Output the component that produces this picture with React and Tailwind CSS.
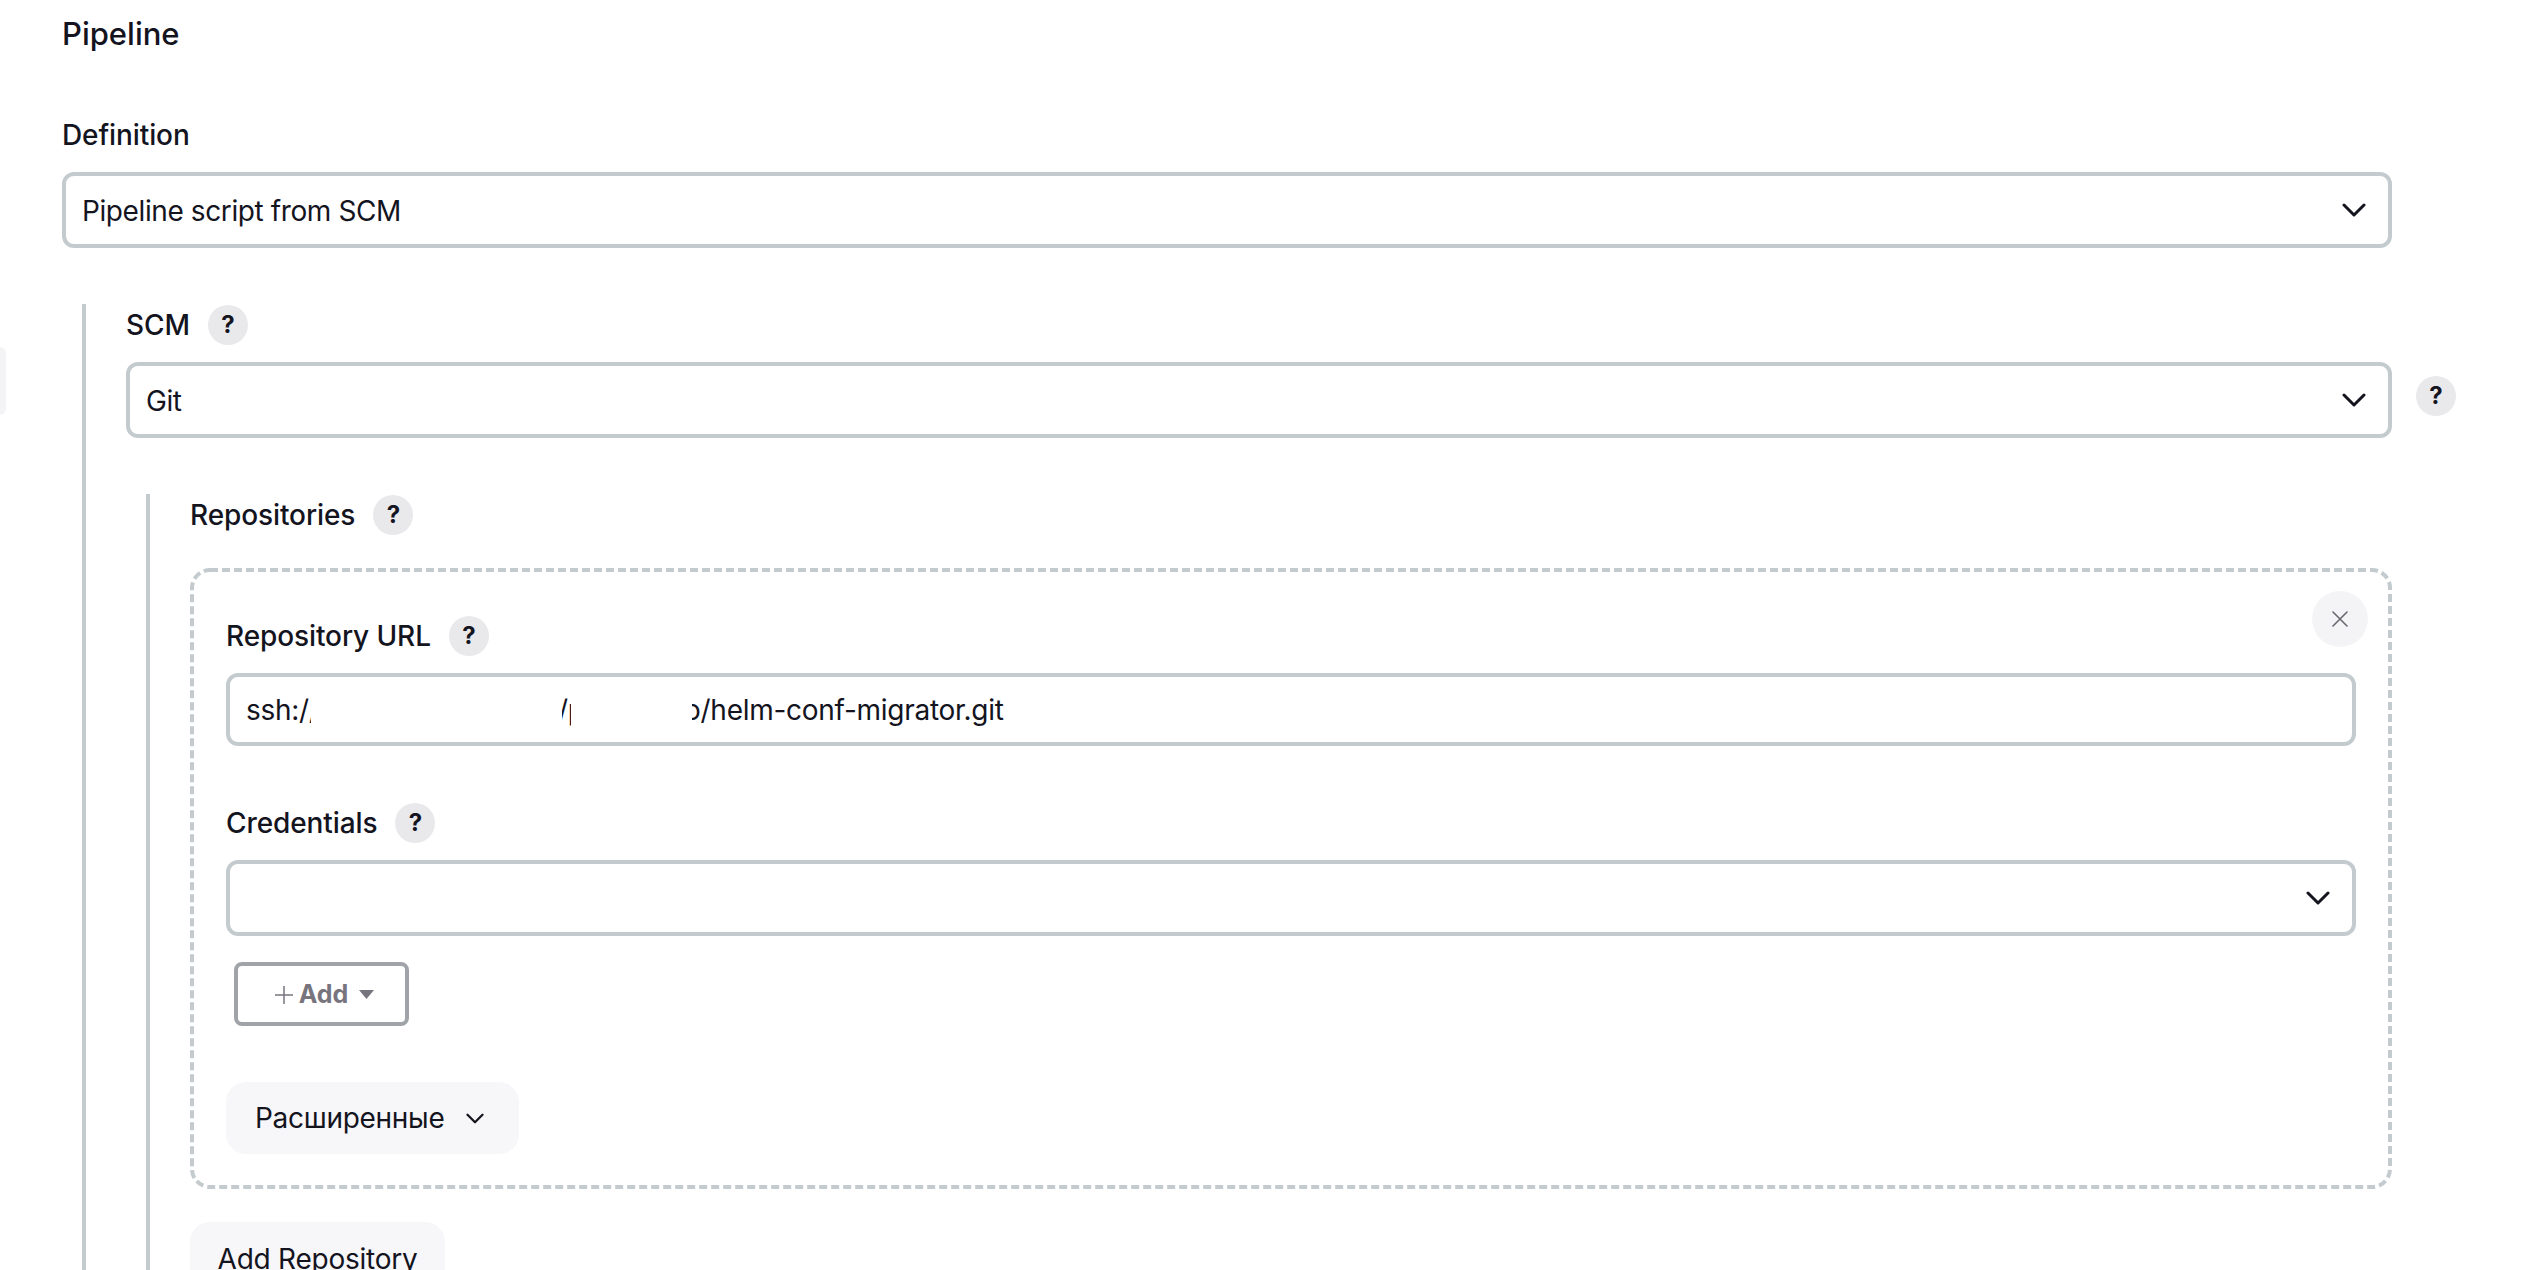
import React from "react";

const Help = ({ className = "" }) => (
  <span className={"flex h-10 w-10 shrink-0 items-center justify-center rounded-full bg-[#e9e9ec] text-[24px] font-bold leading-none text-[#14141f] " + className}>?</span>
);

const Chevron = ({ className = "" }) => (
  <svg className={className} viewBox="0 0 24 14" fill="none" stroke="#14141f" strokeWidth="3" strokeLinecap="round" strokeLinejoin="round">
    <path d="M2 2l10 10L22 2" />
  </svg>
);

const Select = ({ value }) => (
  <div className="flex h-[76px] w-full items-center justify-between rounded-[12px] border-4 border-[#c3cbcf] bg-white pl-4 pr-[22px] text-[28px] tracking-[-0.4px]">
    <span className="pt-[2px]">{value}</span>
    <Chevron className="h-[14px] w-6" />
  </div>
);

const Label = ({ text, help }) => (
  <div className="flex h-10 items-center gap-[18px] text-[28px] font-medium tracking-[-0.1px]">
    <span>{text}</span>
    {help && <Help />}
  </div>
);

export default function App() {
  return (
    <div className="relative h-[1270px] overflow-hidden bg-white pl-[62px] pr-[142px] pt-4 font-['Inter',sans-serif] text-[#14141f]">
      {/* sticky side tab peeking in from the left */}
      <div className="absolute left-0 top-[347px] h-[68px] w-[6px] rounded-r-[8px] bg-[#f4f4f6]" />

      <div className="text-[31px] font-medium leading-9">Pipeline</div>

      <div className="mt-[65px] text-[28px] font-medium leading-9 tracking-[-0.1px]">Definition</div>
      <div className="mt-[19px]">
        <Select value="Pipeline script from SCM" />
      </div>

      {/* SCM */}
      <div className="ml-5 mt-14 border-l-4 border-[#c3cbcf] pl-10 pt-px">
        <Label text="SCM" help />
        <div className="mr-[-64px] mt-[17px] flex items-center gap-6">
          <Select value="Git" />
          <Help className="-mt-2" />
        </div>

        {/* Repositories */}
        <div className="ml-5 mt-14 border-l-4 border-[#c3cbcf] pl-10 pt-px">
          <Label text="Repositories" help />

          <div className="relative mt-[33px] border-4 border-transparent pb-[31px] pl-8 pr-8 pt-11">
            {/* dashed frame: 8 on, 4 off, which a css dashed border can't give */}
            <svg className="pointer-events-none absolute -inset-1 h-[calc(100%+8px)] w-[calc(100%+8px)]" fill="none">
              <rect x="2" y="2" rx="18" className="h-[calc(100%-4px)] w-[calc(100%-4px)]" stroke="#c3cbcf" strokeWidth="4" strokeDasharray="8 4" />
            </svg>

            <button className="absolute right-5 top-[19px] flex h-14 w-14 items-center justify-center rounded-full bg-[#f4f4f6]">
              <svg className="h-4 w-4" viewBox="0 0 16 16" fill="none" stroke="#6b6872" strokeWidth="1.6" strokeLinecap="round">
                <path d="M1 1l14 14M15 1L1 15" />
              </svg>
            </button>

            <Label text="Repository URL" help />
            <div className="mt-[17px] flex h-[73px] items-center rounded-[12px] border-4 border-[#c3cbcf] bg-white pl-4 pt-px text-[28px] tracking-[-0.27px]">
              {/* parts of the URL are blanked out in the picture */}
              <span className="w-[65px] overflow-hidden whitespace-nowrap">ssh://</span>
              <span className="ml-[251px] w-[9px] overflow-hidden whitespace-nowrap"><span className="-ml-1 inline-block">/p</span></span>
              <span className="ml-[121px] overflow-hidden whitespace-nowrap"><span className="-ml-2 inline-block">o/helm-conf-migrator.git</span></span>
            </div>

            <div className="mt-[57px]">
              <Label text="Credentials" help />
            </div>
            <div className="mt-[17px]">
              <Select value="" />
            </div>

            <button className="ml-2 mt-[26px] flex h-16 w-[175px] items-center justify-center gap-[6px] rounded-[8px] border-4 border-[#a0a4a9] bg-white pl-[6px] pt-px text-[25px] font-bold text-[#78747e]">
              <svg className="h-[18px] w-[18px]" viewBox="0 0 18 18" fill="none" stroke="#78747e" strokeWidth="1.5">
                <path d="M9 0v18M0 9h18" />
              </svg>
              <span>Add</span>
              <svg className="ml-[5px] h-[9px] w-[15px]" viewBox="0 0 15 9" fill="#78747e">
                <path d="M0 0h15L7.5 9z" />
              </svg>
            </button>

            <button className="mt-14 flex h-[72px] w-[293px] items-center gap-[22px] rounded-[20px] bg-[#f7f7f9] pl-[29px] text-[28px] tracking-[-0.3px]">
              <span>Расширенные</span>
              <Chevron className="h-[11px] w-[18px]" />
            </button>
          </div>

          <button className="mt-[33px] flex h-[72px] w-[255px] items-center justify-center rounded-[20px] bg-[#f7f7f9] pt-px text-[28px] tracking-[-0.25px]">
            Add Repository
          </button>
        </div>
      </div>
    </div>
  );
}
